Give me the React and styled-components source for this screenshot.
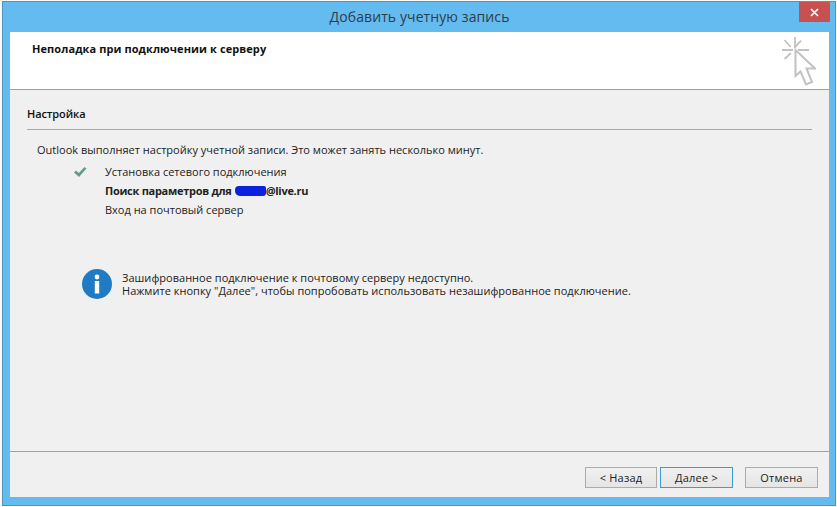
import React from "react";
import styled, { createGlobalStyle } from "styled-components";

const Global = createGlobalStyle`
  html, body {
    margin: 0;
    padding: 0;
    background: #f9f9f9;
  }
  body {
    font-family: "Open Sans", "Noto Sans", sans-serif;
    color: #1a1a1a;
  }
`;

const Desktop = styled.div`
  width: 837px;
  height: 507px;
  box-sizing: border-box;
  padding: 1px 1px 1px 2px;
  overflow: hidden;
`;

const Window = styled.div`
  height: 100%;
  box-sizing: border-box;
  display: flex;
  flex-direction: column;
  background: #63bbf0;
  border: 1px solid #4f94bd;
  padding: 0 6px 8px 7px;
`;

const TitleBar = styled.div`
  height: 30px;
  flex: none;
  position: relative;
  display: flex;
  align-items: center;
  justify-content: center;
  font-size: 14px;
  letter-spacing: 0.1px;
  color: #2f3d47;
  padding-bottom: 1px;
  box-sizing: border-box;
`;

const CloseButton = styled.div`
  position: absolute;
  top: 0;
  right: -1px;
  width: 31px;
  height: 20px;
  background: #c75050;
  display: flex;
  align-items: center;
  justify-content: center;
`;

const Body = styled.div`
  flex: 1;
  display: flex;
  flex-direction: column;
  min-height: 0;
  background: #f0f0f0;
`;

const Header = styled.div`
  height: 58px;
  flex: none;
  box-sizing: border-box;
  background: #fff;
  border-bottom: 1px solid #a0a0a0;
  display: flex;
  justify-content: space-between;
  padding: 5px 13px 0 22px;
`;

const HeaderTitle = styled.div`
  font-size: 11px;
  font-weight: 700;
  line-height: 18px;
  letter-spacing: 0.09px;
  color: #111;
  margin-top: 3px;
`;

const Content = styled.div`
  flex: 1;
  min-height: 0;
  padding: 16px 17px 0 17px;
  display: flex;
  flex-direction: column;
`;

const SectionTitle = styled.div`
  font-size: 11px;
  font-weight: 600;
  line-height: 16px;
  letter-spacing: -0.1px;
  color: #111;
  padding-bottom: 7px;
  border-bottom: 1px solid #a8a8a8;
  width: 785px;
  box-sizing: border-box;
`;

const Intro = styled.div`
  font-size: 11px;
  line-height: 16px;
  letter-spacing: 0.01px;
  margin: 12px 0 0 10px;
  color: #222;
`;

const Steps = styled.div`
  display: flex;
  flex-direction: column;
  gap: 2px;
  margin: 5px 0 0 46px;
`;

const Step = styled.div`
  display: flex;
  align-items: center;
  height: 17px;
  font-size: 11px;
  font-weight: ${(p) => (p.$active ? 700 : 400)};
  letter-spacing: ${(p) => (p.$active ? "-0.27px" : "0")};
  color: #222;
`;

const StepMark = styled.div`
  width: 32px;
  flex: none;
  display: flex;
  align-items: center;
`;

const Redacted = styled.span`
  display: inline-block;
  width: 31px;
  height: 10px;
  margin: 0 0 0 3px;
  background: #0a22e0;
  border-radius: 4px 2px 3px 5px;
`;

const Notice = styled.div`
  display: flex;
  align-items: center;
  gap: 10px;
  margin: 51px 0 0 55px;
`;

const NoticeText = styled.div`
  font-size: 11px;
  line-height: 13px;
  letter-spacing: 0.02px;
  color: #222;
`;

const Footer = styled.div`
  height: 46px;
  flex: none;
  box-sizing: border-box;
  border-top: 1px solid #a0a0a0;
  display: flex;
  justify-content: flex-end;
  align-items: flex-start;
  padding: 15px 11px 0 0;
`;

const Button = styled.div`
  width: ${(p) => p.$width}px;
  height: 21px;
  box-sizing: border-box;
  margin-left: ${(p) => p.$gap || 0}px;
  display: flex;
  align-items: center;
  justify-content: center;
  font-size: 11px;
  letter-spacing: 0.2px;
  color: #222;
  background: linear-gradient(#f0f0f0, #e5e5e5);
  border: 1px solid ${(p) => (p.$primary ? "#3c9bd1" : "#acacac")};
`;

function CursorIcon() {
  return (
    <svg width="34" height="50" viewBox="0 0 34 50" fill="none" stroke="#c2c2c2">
      <path
        d="M13 0v11M0 13h11M2.6 3l6 7M19 3.6l-6.4 7M2.6 22L9 16M16 13h11"
        strokeWidth="1.8"
      />
      <path
        d="M13.5 13V39l5-4.5 5.5 13 6-2.5-5.5-13.5h8.5z"
        fill="#fff"
        strokeWidth="2"
      />
    </svg>
  );
}

function CheckIcon() {
  return (
    <svg width="14" height="12" viewBox="0 0 14 12">
      <path d="M1 6.5l2-2 2.8 2.6L11.5 1 13.5 2.5 6 11z" fill="#5f9e8b" />
    </svg>
  );
}

function InfoIcon() {
  return (
    <svg width="30" height="30" viewBox="0 0 30 30">
      <circle cx="15" cy="15" r="15" fill="#1f7cc4" />
      <circle cx="15" cy="8" r="2.4" fill="#fff" />
      <rect x="12.8" y="12" width="4.4" height="12.5" fill="#fff" />
    </svg>
  );
}

export default function App() {
  return (
    <Desktop>
      <Global />
      <Window>
        <TitleBar>
          Добавить учетную запись
          <CloseButton>
            <svg width="9" height="9" viewBox="0 0 9 9">
              <path d="M1 1l7 7M8 1l-7 7" stroke="#fff" strokeWidth="1.7" />
            </svg>
          </CloseButton>
        </TitleBar>
        <Body>
          <Header>
            <HeaderTitle>Неполадка при подключении к серверу</HeaderTitle>
            <CursorIcon />
          </Header>
          <Content>
            <SectionTitle>Настройка</SectionTitle>
            <Intro>Outlook выполняет настройку учетной записи. Это может занять несколько минут.</Intro>
            <Steps>
              <Step>
                <StepMark>
                  <CheckIcon />
                </StepMark>
                Установка сетевого подключения
              </Step>
              <Step $active>
                <StepMark />
                Поиск параметров для <Redacted />@live.ru
              </Step>
              <Step>
                <StepMark />
                Вход на почтовый сервер
              </Step>
            </Steps>
            <Notice>
              <InfoIcon />
              <NoticeText>
                Зашифрованное подключение к почтовому серверу недоступно.
                <br />
                Нажмите кнопку "Далее", чтобы попробовать использовать незашифрованное подключение.
              </NoticeText>
            </Notice>
          </Content>
          <Footer>
            <Button $width={72}>&lt; Назад</Button>
            <Button $width={73} $gap={3} $primary>
              Далее &gt;
            </Button>
            <Button $width={73} $gap={12}>
              Отмена
            </Button>
          </Footer>
        </Body>
      </Window>
    </Desktop>
  );
}
